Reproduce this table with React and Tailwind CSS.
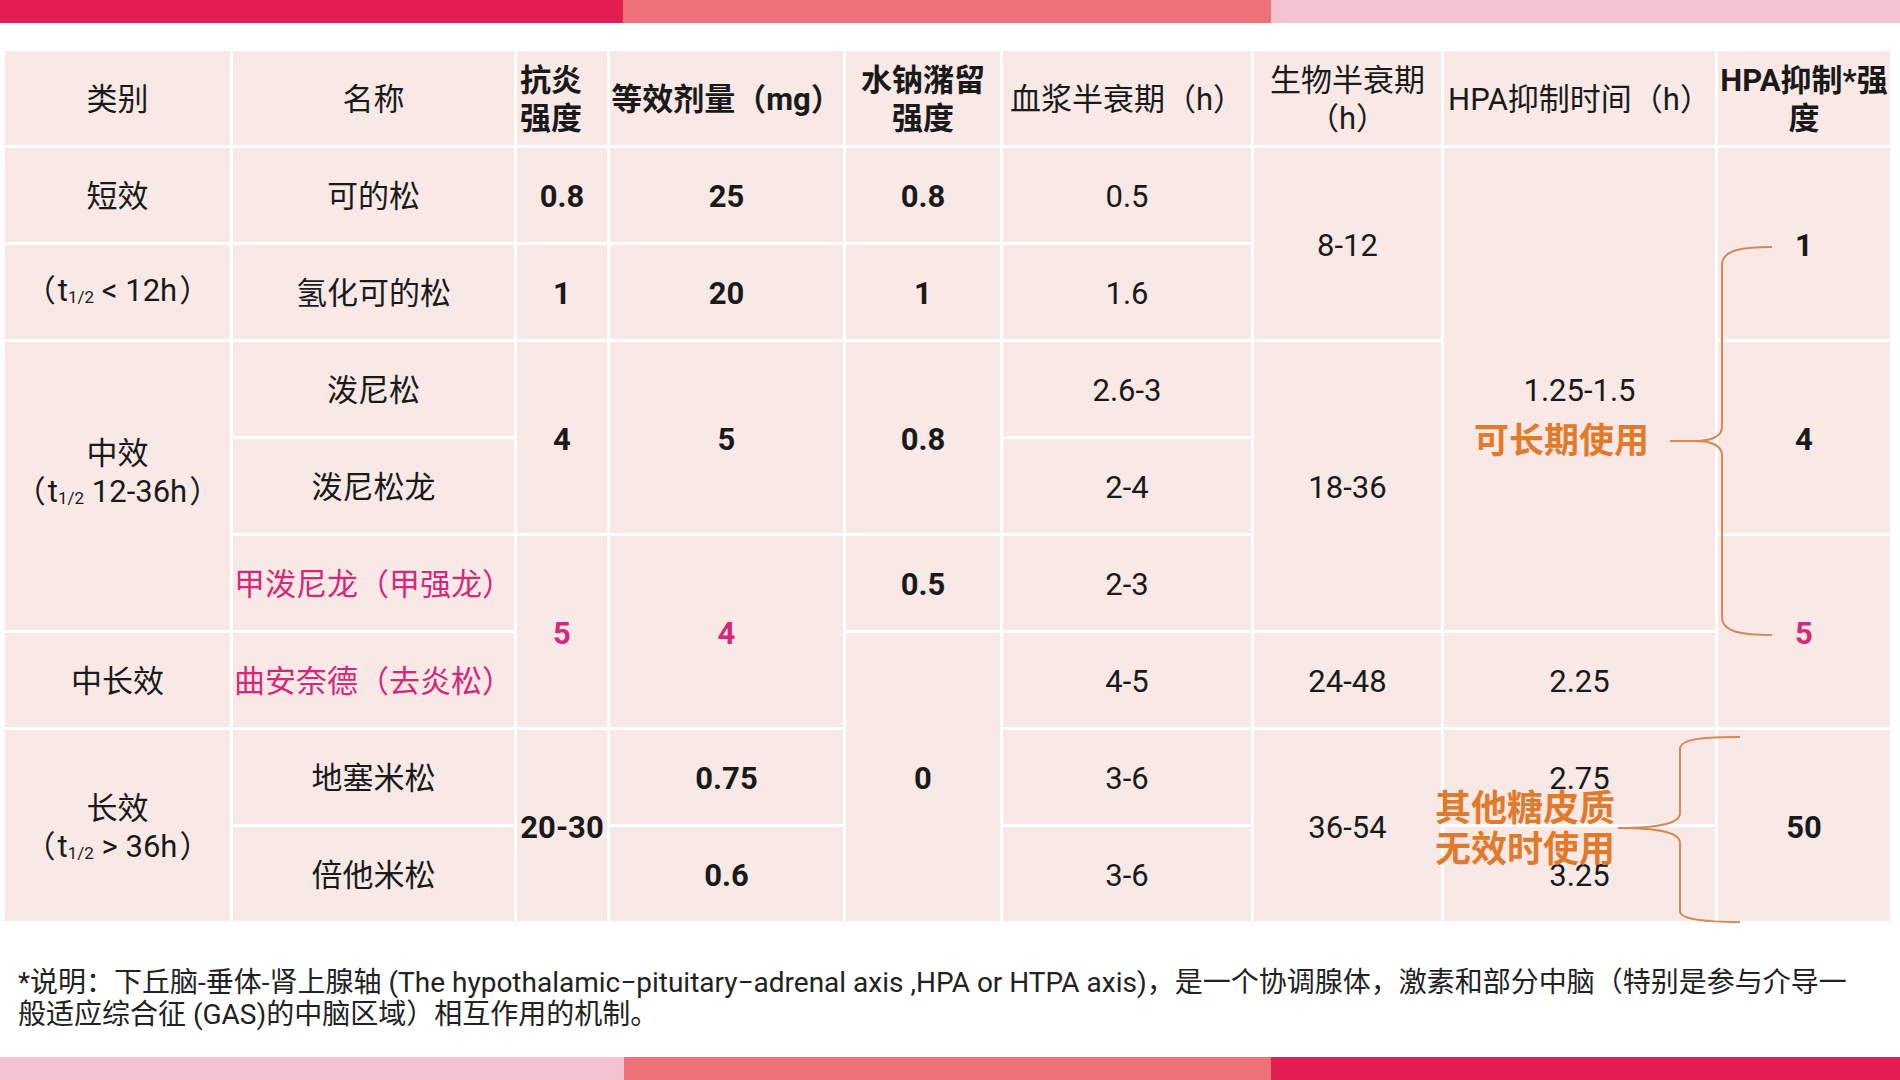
import React from "react";

// corticosteroid comparison table
function Cell({ pos, bold, pink, className = "pt-[4px]", children }) {
  return (
    <div
      className={`${pos} flex items-center justify-center text-center bg-[#f9e9e6] whitespace-nowrap ${
        bold ? "font-bold" : "font-normal"
      } ${pink ? "text-[#d6287a]" : "text-[#1a1a1a]"} ${className}`}
    >
      {children}
    </div>
  );
}

const Half = () => <span className="text-[17px] align-[-2px]">1/2</span>;

function Brace1() {
  return (
    <svg
      className="absolute left-[1660px] top-[190px]"
      width="112"
      height="400"
      viewBox="0 0 112 400"
      fill="none"
    >
      <path
        d="M107 6 C80 6 57 8 57 24 L57 186 C57 196 45 200 30 200 L5 200 M30 200 C45 200 57 204 57 214 L57 376 C57 392 80 394 107 394"
        stroke="#d38a55"
        strokeWidth="2"
      />
    </svg>
  );
}

function Brace2() {
  return (
    <svg
      className="absolute left-[1608px] top-[680px]"
      width="132"
      height="197"
      viewBox="0 0 132 197"
      fill="none"
    >
      <path
        d="M127 6 C95 6 67 7 67 18 L67 82 C67 93 45 97 5 97 C45 97 67 101 67 112 L67 180 C67 189 95 191 127 191"
        stroke="#d38a55"
        strokeWidth="2"
      />
    </svg>
  );
}

export default function App() {
  return (
    <div className="w-[1900px] h-[1080px] flex flex-col bg-white overflow-hidden font-['Roboto','Noto_Sans_CJK_SC',sans-serif]">
      <div className="flex h-[23px] shrink-0">
        <div className="w-[623px] bg-[#e31c54]" />
        <div className="w-[648px] bg-[#ee7378]" />
        <div className="flex-1 bg-[#f4c3cf]" />
      </div>

      <div className="relative ml-[5px] mt-[28px] w-[1885px]">
        <div className="grid grid-cols-[225px_281px_90px_233px_154px_248px_187px_271px_172px] grid-rows-[repeat(9,94px)] gap-[3px] text-[31px] leading-[38px]">
          {/* header */}
          <Cell pos="col-start-1 row-start-1">类别</Cell>
          <Cell pos="col-start-2 row-start-1">名称</Cell>
          <Cell pos="col-start-3 row-start-1" bold className="pt-[4px] justify-start text-left pl-[3px]">
            <span>抗炎<br />强度</span>
          </Cell>
          <Cell pos="col-start-4 row-start-1" bold>等效剂量（mg）</Cell>
          <Cell pos="col-start-5 row-start-1" bold>
            <span>水钠潴留<br />强度</span>
          </Cell>
          <Cell pos="col-start-6 row-start-1">血浆半衰期（h）</Cell>
          <Cell pos="col-start-7 row-start-1">
            <span>生物半衰期<br />（h）</span>
          </Cell>
          <Cell pos="col-start-8 row-start-1">HPA抑制时间（h）</Cell>
          <Cell pos="col-start-9 row-start-1" bold>
            <span>HPA抑制*强<br />度</span>
          </Cell>

          {/* 类别 */}
          <Cell pos="col-start-1 row-start-2">短效</Cell>
          <Cell pos="col-start-1 row-start-3">
            <span>（<span className="ml-[2px]">t</span><Half /> &lt; 12h<span className="mr-[2px]" />）</span>
          </Cell>
          <Cell pos="col-start-1 row-start-4 row-span-3" className="pt-[4px] pb-[24px]">
            <span>中效<br />（<span className="ml-[2px]">t</span><Half /> 12-36h<span className="mr-[2px]" />）</span>
          </Cell>
          <Cell pos="col-start-1 row-start-7">中长效</Cell>
          <Cell pos="col-start-1 row-start-8 row-span-2" className="pt-[10px]">
            <span>长效<br />（<span className="ml-[2px]">t</span><Half />  &gt; 36h<span className="mr-[2px]" />）</span>
          </Cell>

          {/* 名称 */}
          <Cell pos="col-start-2 row-start-2">可的松</Cell>
          <Cell pos="col-start-2 row-start-3">氢化可的松</Cell>
          <Cell pos="col-start-2 row-start-4">泼尼松</Cell>
          <Cell pos="col-start-2 row-start-5">泼尼松龙</Cell>
          <Cell pos="col-start-2 row-start-6" pink>甲泼尼龙（甲强龙）</Cell>
          <Cell pos="col-start-2 row-start-7" pink>曲安奈德（去炎松）</Cell>
          <Cell pos="col-start-2 row-start-8">地塞米松</Cell>
          <Cell pos="col-start-2 row-start-9">倍他米松</Cell>

          {/* 抗炎强度 */}
          <Cell pos="col-start-3 row-start-2" bold>0.8</Cell>
          <Cell pos="col-start-3 row-start-3" bold>1</Cell>
          <Cell pos="col-start-3 row-start-4 row-span-2" bold>4</Cell>
          <Cell pos="col-start-3 row-start-6 row-span-2" bold pink>5</Cell>
          <Cell pos="col-start-3 row-start-8 row-span-2" bold>20-30</Cell>

          {/* 等效剂量 */}
          <Cell pos="col-start-4 row-start-2" bold>25</Cell>
          <Cell pos="col-start-4 row-start-3" bold>20</Cell>
          <Cell pos="col-start-4 row-start-4 row-span-2" bold>5</Cell>
          <Cell pos="col-start-4 row-start-6 row-span-2" bold pink>4</Cell>
          <Cell pos="col-start-4 row-start-8" bold>0.75</Cell>
          <Cell pos="col-start-4 row-start-9" bold>0.6</Cell>

          {/* 水钠潴留强度 */}
          <Cell pos="col-start-5 row-start-2" bold>0.8</Cell>
          <Cell pos="col-start-5 row-start-3" bold>1</Cell>
          <Cell pos="col-start-5 row-start-4 row-span-2" bold>0.8</Cell>
          <Cell pos="col-start-5 row-start-6" bold>0.5</Cell>
          <Cell pos="col-start-5 row-start-7 row-span-3" bold>0</Cell>

          {/* 血浆半衰期 */}
          <Cell pos="col-start-6 row-start-2">0.5</Cell>
          <Cell pos="col-start-6 row-start-3">1.6</Cell>
          <Cell pos="col-start-6 row-start-4">2.6-3</Cell>
          <Cell pos="col-start-6 row-start-5">2-4</Cell>
          <Cell pos="col-start-6 row-start-6">2-3</Cell>
          <Cell pos="col-start-6 row-start-7">4-5</Cell>
          <Cell pos="col-start-6 row-start-8">3-6</Cell>
          <Cell pos="col-start-6 row-start-9">3-6</Cell>

          {/* 生物半衰期 */}
          <Cell pos="col-start-7 row-start-2 row-span-2">8-12</Cell>
          <Cell pos="col-start-7 row-start-4 row-span-3">18-36</Cell>
          <Cell pos="col-start-7 row-start-7">24-48</Cell>
          <Cell pos="col-start-7 row-start-8 row-span-2">36-54</Cell>

          {/* HPA抑制时间 */}
          <Cell pos="col-start-8 row-start-2 row-span-5">1.25-1.5</Cell>
          <Cell pos="col-start-8 row-start-7">2.25</Cell>
          <Cell pos="col-start-8 row-start-8">2.75</Cell>
          <Cell pos="col-start-8 row-start-9">3.25</Cell>

          {/* HPA抑制*强度 */}
          <Cell pos="col-start-9 row-start-2 row-span-2" bold>1</Cell>
          <Cell pos="col-start-9 row-start-4 row-span-2" bold>4</Cell>
          <Cell pos="col-start-9 row-start-6 row-span-2" bold pink>5</Cell>
          <Cell pos="col-start-9 row-start-8 row-span-2" bold>50</Cell>
        </div>

        {/* annotations over the table */}
        <Brace1 />
        <Brace2 />
        <div className="absolute left-[1469px] top-[371px] text-[35px] leading-[40px] font-bold text-[#e27a2c] whitespace-nowrap">
          可长期使用
        </div>
        <div className="absolute left-[1430px] top-[738px] text-[36px] leading-[41px] font-bold text-[#e27a2c] whitespace-nowrap">
          其他糖皮质
          <br />
          无效时使用
        </div>
      </div>

      <p className="mt-[46px] ml-[18px] text-[28px] leading-[32px] text-[#222] whitespace-nowrap">
        *说明：下丘脑-垂体-肾上腺轴 (The hypothalamic−pituitary−adrenal axis ,HPA or HTPA axis)，是一个协调腺体，激素和部分中脑（特别是参与介导一
        <br />
        般适应综合征 (GAS)的中脑区域）相互作用的机制。
      </p>

      <div className="mt-auto flex h-[23px] shrink-0">
        <div className="w-[624px] bg-[#f4c3cf]" />
        <div className="w-[647px] bg-[#ee7378]" />
        <div className="flex-1 bg-[#e31c54]" />
      </div>
    </div>
  );
}
